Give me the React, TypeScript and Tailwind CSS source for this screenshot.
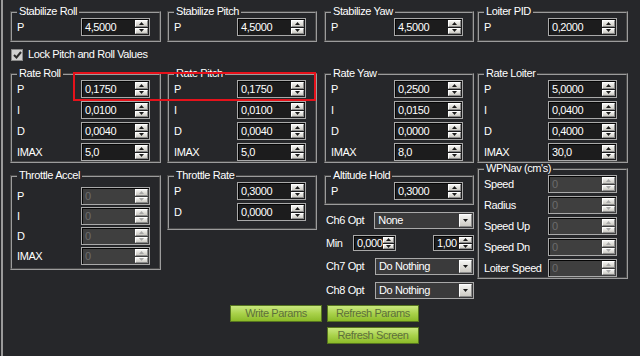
import React from "react";

const txt = "font-['Liberation_Sans',Arial,sans-serif] text-[11px] leading-[13px] tracking-[-0.4px]";

// column placement shared by the two aligned rows
const cols = ["w-[151px]", "ml-[6px] w-[150px]", "ml-[7px] w-[150px]", "ml-[3px] w-[151px]"];

const stabilize = [
  { title: "Stabilize Roll", value: "4,5000" },
  { title: "Stabilize Pitch", value: "4,5000" },
  { title: "Stabilize Yaw", value: "4,5000" },
  { title: "Loiter PID", value: "0,2000" },
];

const rates = [
  { title: "Rate Roll", values: ["0,1750", "0,0100", "0,0040", "5,0"] },
  { title: "Rate Pitch", values: ["0,1750", "0,0100", "0,0040", "5,0"] },
  { title: "Rate Yaw", values: ["0,2500", "0,0150", "0,0000", "8,0"] },
  { title: "Rate Loiter", values: ["5,0000", "0,0400", "0,4000", "30,0"] },
];

const pidLabels = ["P", "I", "D", "IMAX"];

const Arrow = ({ up, faded }: { up?: boolean; faded?: boolean }) => (
  <svg width="5" height="3" viewBox="0 0 5 3" className="block">
    <path d={up ? "M0 3 L2.5 0 L5 3 Z" : "M0 0 L5 0 L2.5 3 Z"} fill={faded ? "#a8a8a8" : "#1a1a1a"} />
  </svg>
);

const SpinArrows = ({ faded }: { faded?: boolean }) => (
  <div className="flex w-[14px] flex-col gap-px py-px pr-px">
    {[true, false].map((up) => (
      <div
        key={String(up)}
        className="flex flex-1 items-center justify-center border border-white border-r-[#8a8a8a] border-b-[#8a8a8a] bg-gradient-to-b from-[#f4f4f2] to-[#cdcbc4]"
      >
        <Arrow up={up} faded={faded} />
      </div>
    ))}
  </div>
);

const Spin = ({ value, disabled, w = "w-[69px]", h = "h-[18px]" }: { value: string; disabled?: boolean; w?: string; h?: string }) => (
  <div
    className={`flex ${h} ${w} border border-[#a9a9a9] shadow-[inset_1px_1px_0_#050505] ${disabled ? "bg-[#3f3f3f]" : "bg-[#1c1c1d]"}`}
  >
    <span className={`flex flex-1 items-center pl-[3px] ${disabled ? "text-[#6c6c6c]" : "text-white"}`}>{value}</span>
    <SpinArrows faded={disabled} />
  </div>
);

const Row = ({ label, value, disabled }: { label: string; value: string; disabled?: boolean }) => (
  <div className="flex items-center justify-between pl-[5px] pr-[9px]">
    <span className="text-white">{label}</span>
    <Spin value={value} disabled={disabled} />
  </div>
);

const Group = ({ title, className = "", children }: { title: string; className?: string; children: React.ReactNode }) => (
  <fieldset className={`border-2 border-[#9c9c9c] [border-style:groove] ${className}`}>
    <legend className="ml-[5px] px-[2px] text-white">{title}</legend>
    {children}
  </fieldset>
);

const Combo = ({ value }: { value: string }) => (
  <div className="flex h-[17px] w-[101px] border border-[#a9a9a9] bg-[#3a3a3b]">
    <span className="flex flex-1 items-center pl-[3px] text-white">{value}</span>
    <div className="m-px flex w-[13px] items-center justify-center border border-white border-r-[#8a8a8a] border-b-[#8a8a8a] bg-gradient-to-b from-[#f4f4f2] to-[#cdcbc4]">
      <Arrow />
    </div>
  </div>
);

const GreenButton = ({ label, className = "" }: { label: string; className?: string }) => (
  <div
    className={`flex h-[17px] items-center justify-center border border-[#56751f] bg-gradient-to-b from-[#c9e77e] via-[#a9d24a] to-[#8cbb28] text-[#5d6f3c] ${className}`}
  >
    {label}
  </div>
);

export default function App() {
  return (
    <div className={`relative h-[356px] w-[640px] overflow-hidden bg-[#26272a] pl-px ${txt}`}>
      <div className="h-full border-l-2 border-[#9a9a9a] pl-[7px]">
        {/* --- Stabilize row --- */}
        <div className="flex pt-[5px]">
          {stabilize.map((g, i) => (
            <Group key={g.title} title={g.title} className={`${cols[i]} pb-[4px]`}>
              <Row label="P" value={g.value} />
            </Group>
          ))}
        </div>

        {/* --- Lock checkbox --- */}
        <div className="mt-[5px] flex h-[15px] items-center gap-[5px] pl-px">
          <div className="flex h-[12px] w-[12px] items-center justify-center border border-[#8a8a8a] bg-[#d0d0d0]">
            <svg width="9" height="8" viewBox="0 0 9 8">
              <path d="M1 4 L3.5 6.5 L8 1" stroke="#2a2a2a" strokeWidth="2" fill="none" />
            </svg>
          </div>
          <span className="text-white">Lock Pitch and Roll Values</span>
        </div>

        {/* --- Rate row --- */}
        <div className="mt-[5px] flex">
          {rates.map((g, i) => (
            <Group key={g.title} title={g.title} className={cols[i]}>
              <div className="flex flex-col gap-[3px]">
                {g.values.map((v, j) => (
                  <Row key={j} label={pidLabels[j]} value={v} />
                ))}
              </div>
            </Group>
          ))}
        </div>

        {/* --- Lower row --- */}
        <div className="flex items-start">
          <Group title="Throttle Accel" className="mt-[6px] w-[151px] pb-[3px]">
            <div className="flex flex-col gap-[2px] pt-[5px]">
              {pidLabels.map((l) => (
                <Row key={l} label={l} value="0" disabled />
              ))}
            </div>
          </Group>

          <Group title="Throttle Rate" className="mt-[6px] ml-[6px] w-[150px] pb-[7px]">
            <div className="flex flex-col gap-[3px]">
              <Row label="P" value="0,3000" />
              <Row label="D" value="0,0000" />
            </div>
          </Group>

          <div className="mt-[6px] ml-[7px] w-[150px]">
            <Group title="Altitude Hold" className="pb-[3px]">
              <Row label="P" value="0,3000" />
            </Group>
            <div className="mt-[7px] flex items-center pl-[2px]">
              <span className="w-[49px] text-white">Ch6 Opt</span>
              <Combo value="None" />
            </div>
            <div className="mt-[6px] flex items-center pl-[2px]">
              <span className="w-[28px] text-white">Min</span>
              <Spin value="0,000" w="w-[43px]" h="h-[16px]" />
              <div className="ml-[37px]">
                <Spin value="1,00" w="w-[41px]" h="h-[16px]" />
              </div>
            </div>
            <div className="mt-[7px] flex items-center pl-[2px]">
              <span className="w-[50px] text-white">Ch7 Opt</span>
              <Combo value="Do Nothing" />
            </div>
            <div className="mt-[7px] flex items-center pl-[2px]">
              <span className="w-[50px] text-white">Ch8 Opt</span>
              <Combo value="Do Nothing" />
            </div>
          </div>

          <Group title="WPNav (cm's)" className="-mt-[1px] ml-[3px] w-[151px]">
            <div className="flex flex-col gap-[3px]">
              {["Speed", "Radius", "Speed Up", "Speed Dn", "Loiter Speed"].map((l) => (
                <Row key={l} label={l} value="0" disabled />
              ))}
            </div>
          </Group>
        </div>

        {/* --- Buttons --- */}
        <div className="mt-[6px] ml-[220px] grid grid-cols-[92px_92px] gap-[5px]">
          <GreenButton label="Write Params" />
          <GreenButton label="Refresh Params" />
          <GreenButton label="Refresh Screen" className="col-start-2" />
        </div>
      </div>

      {/* highlight marker drawn over the screenshot */}
      <div className="pointer-events-none absolute left-[73px] top-[72px] h-[29px] w-[243px] border-2 border-[#e5121b]" />
    </div>
  );
}
